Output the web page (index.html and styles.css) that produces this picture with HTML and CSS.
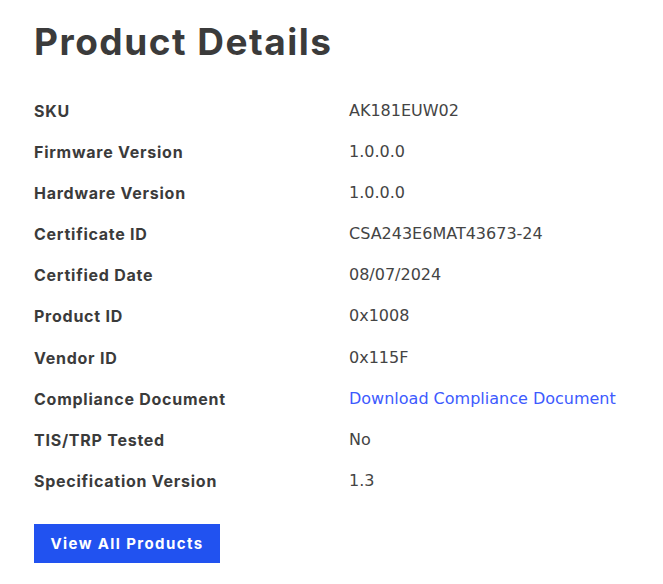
FILE: index.html
```html
<!DOCTYPE html>
<html lang="en">
<head>
<meta charset="utf-8">
<title>Product Details</title>
<link rel="stylesheet" href="styles.css">
</head>
<body>
<main class="page">
  <h1 class="title">Product Details</h1>
  <dl class="details">
    <div class="row"><dt>SKU</dt><dd>AK181EUW02</dd></div>
    <div class="row"><dt>Firmware Version</dt><dd>1.0.0.0</dd></div>
    <div class="row"><dt>Hardware Version</dt><dd>1.0.0.0</dd></div>
    <div class="row"><dt>Certificate ID</dt><dd>CSA243E6MAT43673-24</dd></div>
    <div class="row"><dt>Certified Date</dt><dd>08/07/2024</dd></div>
    <div class="row"><dt>Product ID</dt><dd>0x1008</dd></div>
    <div class="row"><dt>Vendor ID</dt><dd>0x115F</dd></div>
    <div class="row"><dt>Compliance Document</dt><dd><a class="link" href="#">Download Compliance Document</a></dd></div>
    <div class="row"><dt>TIS/TRP Tested</dt><dd>No</dd></div>
    <div class="row"><dt>Specification Version</dt><dd>1.3</dd></div>
  </dl>
  <a class="btn" href="#">View All Products</a>
</main>
</body>
</html>
```

FILE: styles.css
```css
* { box-sizing: border-box; }
html, body { margin: 0; padding: 0; background: #ffffff; }
body { color: #3b3b3b; }
.page {
  padding: 18px 34px 0 34px;
  display: flex;
  flex-direction: column;
  align-items: flex-start;
}
.title {
  margin: 0;
  font-family: "Inter", "Liberation Sans", sans-serif;
  font-weight: 700;
  font-size: 37px;
  line-height: 48px;
  color: #3b3b3b;
  letter-spacing: 1.5px;
}
.details {
  margin: 35px 0 0 0;
  width: 100%;
  display: flex;
  flex-direction: column;
}
.row {
  display: grid;
  grid-template-columns: 315px 1fr;
  height: 41.1px;
  align-items: start;
}
dt {
  font-family: "Inter", "Liberation Sans", sans-serif;
  font-weight: 700;
  font-size: 16px;
  line-height: 20px;
  letter-spacing: 0.75px;
  color: #3b3b3b;
}
dd {
  margin: 0;
  font-family: "DejaVu Sans", "Liberation Sans", sans-serif;
  font-weight: 400;
  font-size: 16px;
  line-height: 20px;
  color: #444444;
}
.link { color: #3d5afe; text-decoration: none; }
.btn {
  margin-top: 12px;
  display: inline-flex;
  align-items: center;
  justify-content: center;
  width: 186px;
  height: 39px;
  background: #2152f0;
  color: #ffffff;
  font-family: "Inter", "Liberation Sans", sans-serif;
  font-weight: 700;
  font-size: 15px;
  letter-spacing: 1.4px;
  text-decoration: none;
}
```
